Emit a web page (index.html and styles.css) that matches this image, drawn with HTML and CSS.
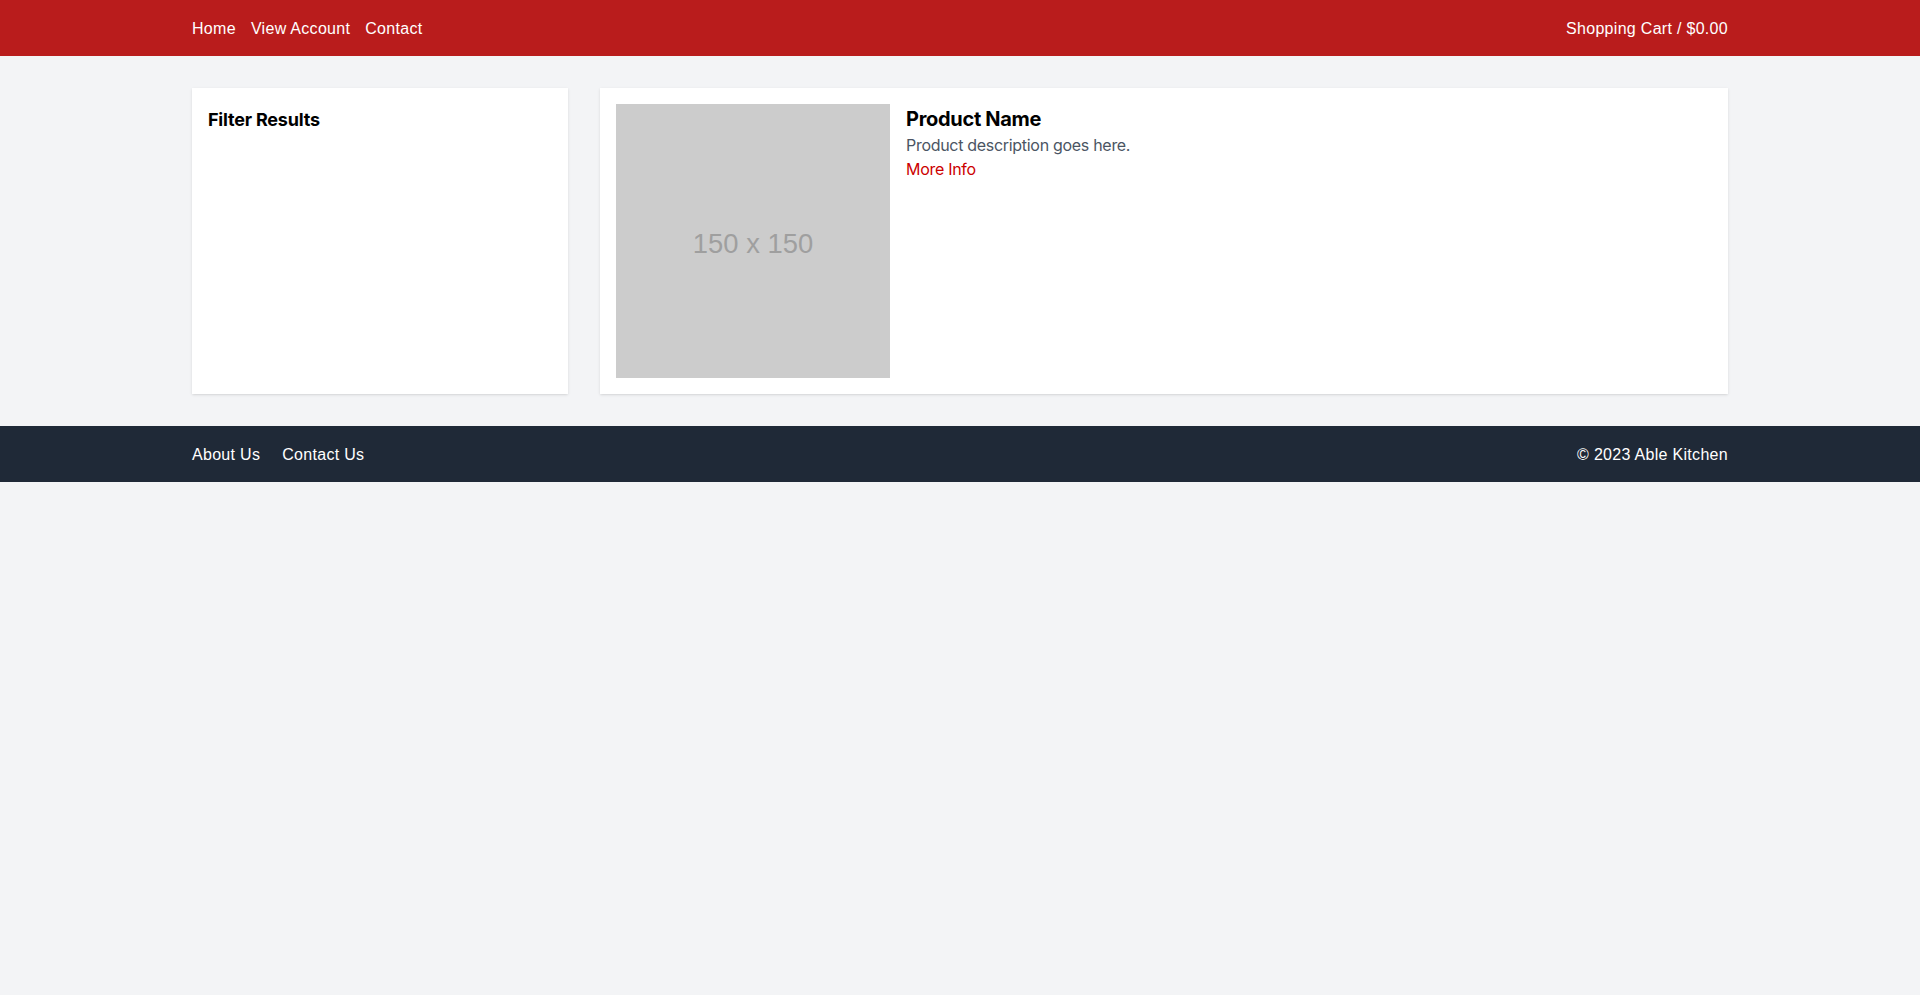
FILE: index.html
```html
<!DOCTYPE html>
<html lang="en">
<head>
<meta charset="utf-8">
<title>Able Kitchen</title>
<link rel="stylesheet" href="styles.css">
</head>
<body>
<header class="site-header">
  <div class="container bar">
    <nav class="nav">
      <a href="#" class="nav-link">Home</a>
      <a href="#" class="nav-link">View Account</a>
      <a href="#" class="nav-link">Contact</a>
    </nav>
    <a href="#" class="cart">Shopping Cart / $0.00</a>
  </div>
</header>
<main class="container main">
  <aside class="card filter">
    <h2 class="filter-title">Filter Results</h2>
  </aside>
  <section class="card products">
    <div class="product">
      <svg class="thumb" viewBox="0 0 150 150" width="274" height="274">
        <rect width="150" height="150" fill="#cccccc"/>
        <text x="75" y="81.5" text-anchor="middle" font-family="Liberation Sans, Arial, sans-serif" font-size="15" fill="#9f9f9f">150 x 150</text>
      </svg>
      <div class="info">
        <h3 class="product-name">Product Name</h3>
        <p class="product-desc">Product description goes here.</p>
        <a href="#" class="more">More Info</a>
      </div>
    </div>
  </section>
</main>
<footer class="site-footer">
  <div class="container bar">
    <nav class="nav footer-nav">
      <a href="#" class="nav-link">About Us</a>
      <a href="#" class="nav-link">Contact Us</a>
    </nav>
    <span class="copy">© 2023 Able Kitchen</span>
  </div>
</footer>
</body>
</html>
```
FILE: styles.css
```css
* { box-sizing: border-box; }
html, body { margin: 0; padding: 0; }
body {
  background: #f3f4f6;
  font-family: Inter, "Noto Sans", sans-serif;
  font-size: 16px;
  line-height: 24px;
  color: #000;
}
a { text-decoration: none; color: inherit; }
h2, h3, p { margin: 0; }

.container {
  width: 1536px;
  margin: 0 auto;
}

.site-header {
  background: #b91c1c;
  color: #fff;
  font-family: "Liberation Sans", Arial, sans-serif;
  letter-spacing: 0.3px;
}
.bar {
  display: flex;
  justify-content: space-between;
  align-items: center;
  padding: 17px 0 15px;
}
.nav { display: flex; gap: 15px; }
.footer-nav { gap: 22px; }

.main {
  display: flex;
  gap: 32px;
  padding: 32px 0;
}
.card {
  background: #fff;
  box-shadow: 0 1px 3px 0 rgba(0,0,0,0.1), 0 1px 2px -1px rgba(0,0,0,0.1);
  padding: 16px;
}
.filter { width: 376px; flex: none; }
.products { flex: 1; }
.filter-title {
  font-size: 18px;
  line-height: 28px;
  font-weight: 700;
  letter-spacing: -0.2px;
  padding-top: 2px;
}
.product { display: flex; gap: 16px; align-items: flex-start; }
.thumb { display: block; flex: none; }
.info { padding-top: 1px; }
.product-name {
  font-size: 20px;
  line-height: 28px;
  font-weight: 700;
  letter-spacing: -0.3px;
}
.product-desc { color: #4b5563; letter-spacing: -0.3px; }
.more { color: #cc0000; letter-spacing: -0.3px; }

.site-footer {
  background: #1f2937;
  color: #fff;
  font-family: "Liberation Sans", Arial, sans-serif;
  letter-spacing: 0.3px;
}
```
